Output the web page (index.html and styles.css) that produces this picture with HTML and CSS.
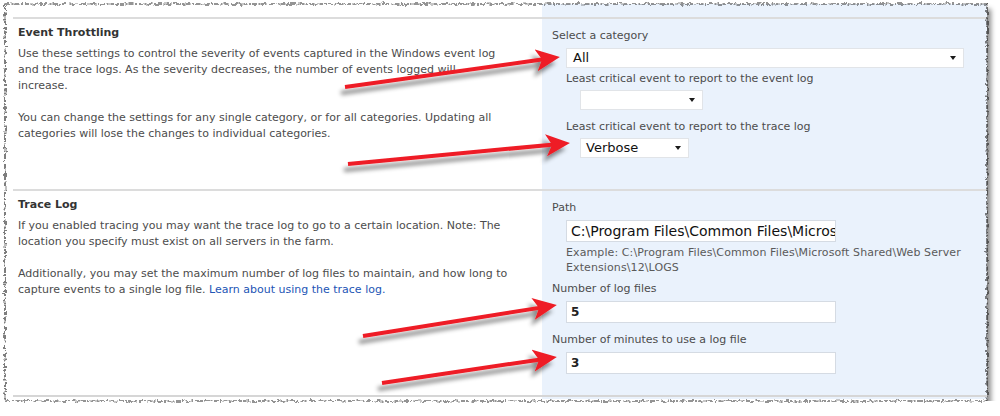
FILE: index.html
```html
<!DOCTYPE html>
<html lang="en">
<head>
    <meta charset="UTF-8">
    <title>Diagnostic Logging</title>
    <link rel="stylesheet" href="styles.css">
</head>
<body>
<div class="sheet">
    <div class="section first">
        <div class="desc narrow">
            <h3>Event Throttling</h3>
            <p>Use these settings to control the severity of events captured in the Windows event log and the trace logs. As the severity decreases, the number of events logged will increase.</p>
            <p>You can change the settings for any single category, or for all categories. Updating all categories will lose the changes to individual categories.</p>
        </div>
        <div class="fields">
            <div class="label">Select a category</div>
            <div class="indent">
                <div class="select wide"><span>All</span></div>
                <div class="label tight">Least critical event to report to the event log</div>
                <div class="select event"><span></span></div>
                <div class="label gap">Least critical event to report to the trace log</div>
                <div class="select trace"><span>Verbose</span></div>
            </div>
        </div>
    </div>
    <div class="section last">
        <div class="desc">
            <h3>Trace Log</h3>
            <p>If you enabled tracing you may want the trace log to go to a certain location. Note: The location you specify must exist on all servers in the farm.</p>
            <p>Additionally, you may set the maximum number of log files to maintain, and how long to capture events to a single log file. <a href="#">Learn about using the trace log.</a></p>
        </div>
        <div class="fields">
            <div class="label">Path</div>
            <div class="indent">
                <div class="textbox path">C:\Program Files\Common Files\Microsoft Shared\Web Server Extensions\12\LOGS</div>
                <div class="example">Example: C:\Program Files\Common Files\Microsoft Shared\Web Server Extensions\12\LOGS</div>
            </div>
            <div class="label after">Number of log files</div>
            <div class="indent">
                <div class="textbox">5</div>
            </div>
            <div class="label gap">Number of minutes to use a log file</div>
            <div class="indent">
                <div class="textbox">3</div>
            </div>
        </div>
    </div>
</div>

<!-- annotation layer: torn paper edge and red arrows -->
<svg class="overlay" width="1000" height="416" viewBox="0 0 1000 416">
    <defs>
        <filter id="torn" x="-2%" y="-4%" width="104%" height="108%">
            <feTurbulence type="fractalNoise" baseFrequency="0.22" numOctaves="2" seed="7"/>
            <feDisplacementMap in="SourceGraphic" scale="5" xChannelSelector="R" yChannelSelector="G"/>
        </filter>
        <filter id="shade" x="-10%" y="-40%" width="120%" height="180%">
            <feDropShadow dx="-4" dy="6" stdDeviation="2" flood-color="#000" flood-opacity="0.45"/>
        </filter>
        <marker id="head" markerUnits="userSpaceOnUse" markerWidth="26" markerHeight="24" refX="11" refY="11" orient="auto">
            <path d="M0,0 L24,11 L0,22 L6,11 Z" fill="#ee1c25"/>
        </marker>
    </defs>
    <rect x="5" y="4" width="982" height="397" fill="none" stroke="#2b2b2b" stroke-width="1.2" stroke-dasharray="5 1.5 2 1" filter="url(#torn)"/>
    <g filter="url(#shade)" stroke="#ee1c25" stroke-width="4" fill="none" marker-end="url(#head)">
        <line x1="345" y1="87" x2="547" y2="58.8"/>
        <line x1="348" y1="164" x2="557" y2="144.2"/>
        <line x1="363" y1="336" x2="544" y2="307.1"/>
        <line x1="382" y1="383" x2="544" y2="358.9"/>
    </g>
</svg>
</body>
</html>
```

FILE: styles.css
```css
body {
    margin: 0;
    background-color: #fff;
    font-family: "DejaVu Sans", Verdana, sans-serif;
    font-size: 11px;
    color: #4c4c4c;
}
.sheet {
    width: 982px;
    height: 397px;
    margin: 4px 0 0 5px;
    padding: 13px 0 0 8px;
    box-sizing: border-box;
    background: linear-gradient(to right, #fff 537px, #eaf2fc 537px) no-repeat;
    background-size: 100% 395px;
    box-shadow: 4px 5px 5px rgba(0, 0, 0, 0.45);
}
.section {
    display: grid;
    grid-template-columns: 529px 1fr;
    border-top: 2px solid #dcdcdc;
}
.section.first {
    height: 172px;
    box-sizing: border-box;
}
.section.last {
    height: 208px;
    box-sizing: border-box;
    border-bottom: 2px solid #d6d6d6;
}
.desc {
    padding: 6px 0 0 5px;
    line-height: 16px;
}
.desc h3 {
    margin: 0 0 5px;
    font-size: 11px;
    color: #333;
}
.desc p {
    margin: 0 0 16px;
    max-width: 493px;
}
.desc.narrow p {
    max-width: 480px;
}
.desc a {
    color: #2255b5;
    text-decoration: none;
}
.fields {
    padding: 9px 0 0 10px;
    line-height: 16px;
}
.label.tight {
    margin-top: 3px;
}
.label.gap {
    margin-top: 9px;
}
.label.after {
    margin-top: 6px;
}
.indent {
    margin-left: 14px;
}
.select {
    display: flex;
    align-items: center;
    justify-content: space-between;
    height: 20px;
    box-sizing: border-box;
    padding: 0 7px 0 6px;
    background-color: #fff;
    border: 1px solid #e1e4e8;
    font-size: 13px;
    color: #111;
    margin-top: 3px;
}
.select::after {
    content: "";
    border-left: 3.5px solid transparent;
    border-right: 3.5px solid transparent;
    border-top: 4px solid #1a1a1a;
}
.select.wide {
    width: 398px;
    margin-top: 4px;
}
.select.event {
    width: 123px;
    margin-left: 14px;
}
.select.trace {
    width: 109px;
    margin-left: 14px;
    padding-left: 5px;
}
.textbox {
    width: 270px;
    height: 22px;
    box-sizing: border-box;
    margin-top: 4px;
    padding: 0 4px;
    background-color: #fff;
    border: 1px solid #d5dbe3;
    font-size: 12px;
    font-weight: bold;
    line-height: 20px;
    color: #222;
    white-space: nowrap;
    overflow: hidden;
}
.textbox.path {
    font-size: 14px;
    font-weight: normal;
    color: #111;
}
.example {
    margin-top: 3px;
    width: 412px;
    line-height: 15px;
    letter-spacing: 0.1px;
    color: #5a5a5a;
}
.overlay {
    position: absolute;
    left: 0;
    top: 0;
    pointer-events: none;
}
```
